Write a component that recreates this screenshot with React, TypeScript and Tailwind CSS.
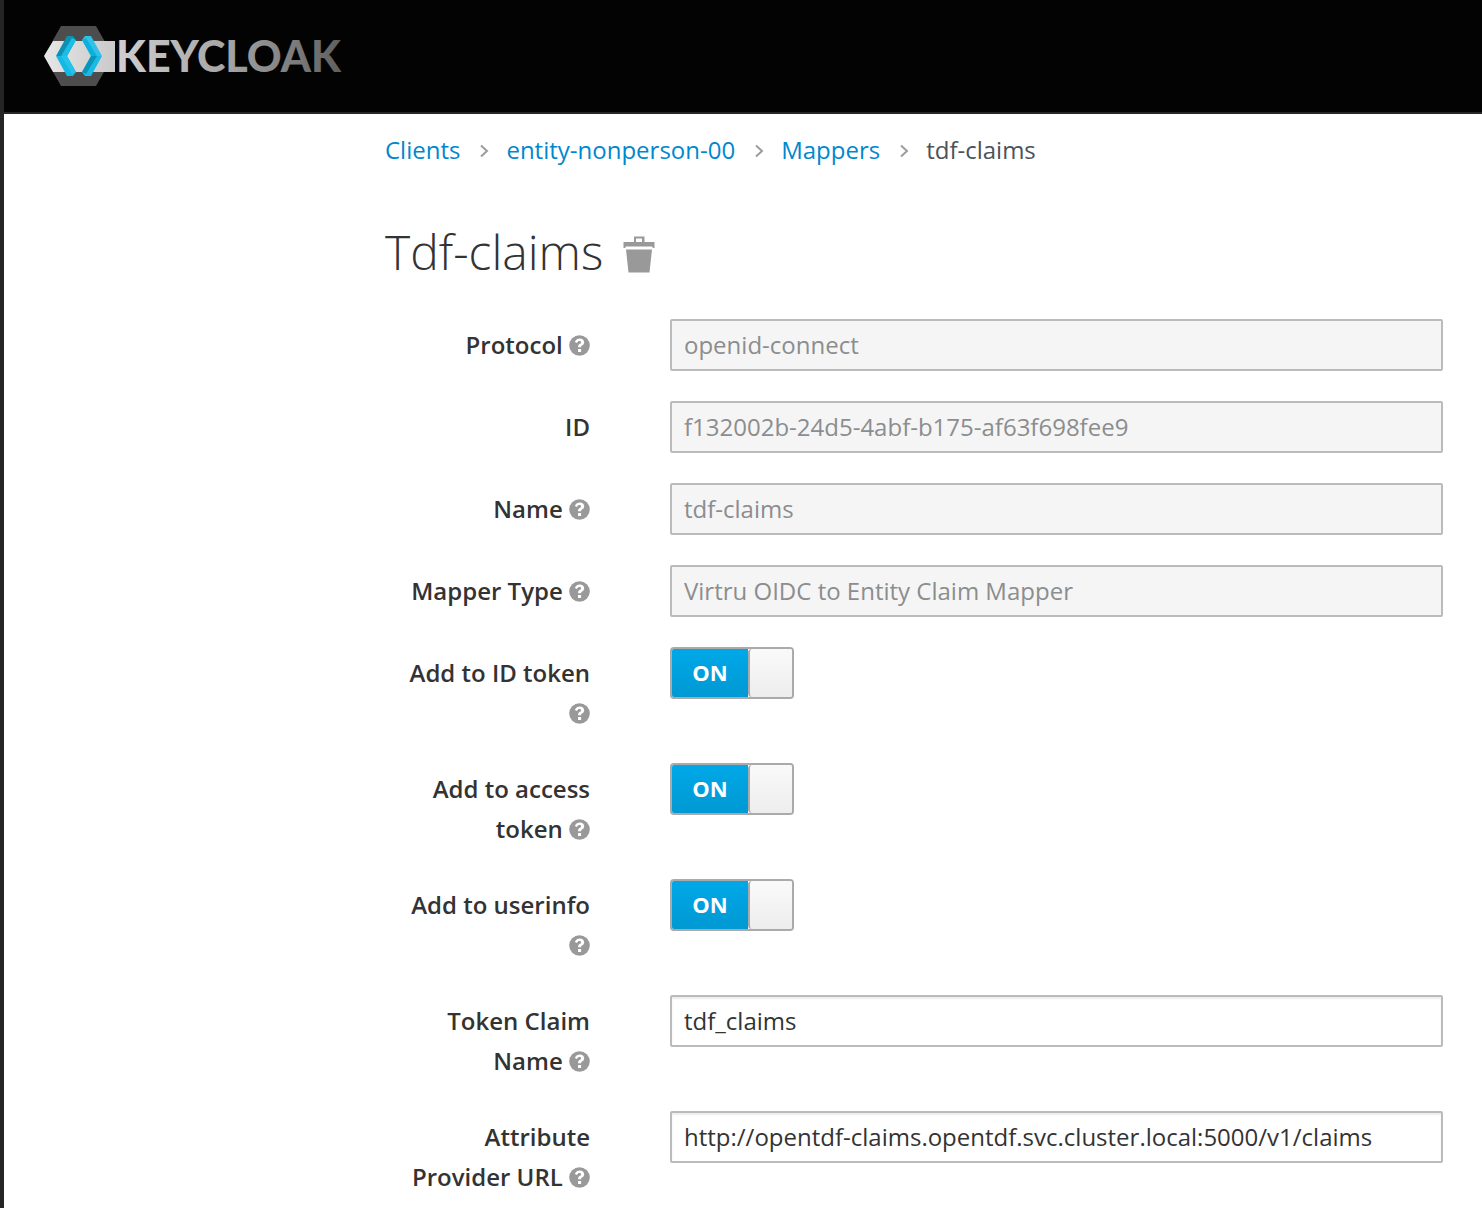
import { Fragment, useState } from "react";

function Logo() {
  return (
    <svg width="300" height="60" viewBox="0 0 300 60" role="img" aria-label="Keycloak">
      <defs>
        <linearGradient id="bar" x1="0" x2="1" y1="0" y2="0">
          <stop offset="0" stopColor="#e6e6e6" />
          <stop offset="1" stopColor="#cacaca" />
        </linearGradient>
        <linearGradient id="word" gradientUnits="userSpaceOnUse" x1="74" x2="296" y1="0" y2="0">
          <stop offset="0" stopColor="#cfcfcf" />
          <stop offset="0.5" stopColor="#a4a4a4" />
          <stop offset="1" stopColor="#606060" />
        </linearGradient>
      </defs>
      <path d="M17 0H52L69 30L52 60H17L0 30Z" fill="#4d4d4d" />
      <path d="M0 30L9 15H0ZM0 30L9 46H0Z" fill="#030303" />
      <path d="M9 15H71V46H9L0 30Z" fill="url(#bar)" />
      <path d="M23 10H29L32 14L23 30L12 30Z" fill="#0b90b2" />
      <path d="M28 12L32 14L23 30H17Z" fill="#1abde8" />
      <path d="M12 30H23L32 46L29 50H23Z" fill="#14b8e4" />
      <path d="M17 30H23L32 46L28 48Z" fill="#27c2ea" />
      <path d="M47 10H41L38 14L47 30L58 30Z" fill="#31c1e8" />
      <path d="M42 12L38 14L47 30H53Z" fill="#0cb0dc" />
      <path d="M58 30H47L38 46L41 50H47Z" fill="#18bbe6" />
      <path d="M53 30H47L38 46L42 48Z" fill="#0a94b8" />
      <text x="72" y="46" fill="url(#word)" fontSize="43" fontWeight="900" fontFamily="Lato, sans-serif">
        KEYCLOAK
      </text>
    </svg>
  );
}

function Help({ about }: { about: string }) {
  return (
    <button type="button" aria-label={`Help: ${about}`} className="inline-block h-[21px] w-[21px] align-[-2px]">
      <svg viewBox="0 0 21 21" className="block h-full w-full">
        <circle cx="10.5" cy="10.5" r="10.3" fill="#999" />
        <path
          d="M5.8 6.9C6.9 4.7 8.4 3.5 10.8 3.5C13.3 3.5 15.2 5 15.2 7.2C15.2 8.8 14.3 9.8 13.1 10.5C12.4 10.9 12.1 11.2 12.1 12.3H9C9 10.3 9.6 9.6 11 8.8C11.7 8.4 12 8.1 12 7.4C12 6.6 11.4 6.1 10.4 6.1C9.4 6.1 8.8 6.6 8 7.9Z"
          fill="#fff"
        />
        <path d="M9 14H12.1V17H9Z" fill="#fff" />
      </svg>
    </button>
  );
}

function Chevron() {
  return (
    <svg width="9" height="14" viewBox="0 0 9 14" className="mr-[17px] ml-5 mt-0.5" aria-hidden="true">
      <path d="M1 1.500L7 7L1 12.500" fill="none" stroke="#9c9c9c" strokeWidth="2" />
    </svg>
  );
}

function Switch({ id, defaultOn }: { id: string; defaultOn: boolean }) {
  const [on, setOn] = useState(defaultOn);
  return (
    <button
      id={id}
      type="button"
      role="switch"
      aria-checked={on}
      onClick={() => setOn(!on)}
      className={`flex h-[52px] w-[124px] overflow-hidden rounded border-2 border-[#aaa] ${on ? "flex-row" : "flex-row-reverse"}`}
    >
      <span
        className={`flex h-full flex-1 items-center justify-center text-[22px] font-bold ${on ? "bg-linear-to-b from-[#00a8e8] to-[#0099d3] text-white" : "bg-[#eee] text-[#333]"}`}
      >
        {on ? "ON" : "OFF"}
      </span>
      <span className="h-12 w-11 rounded-l-sm border-l-2 border-[#aaa] bg-linear-to-b from-[#fafafa] to-[#ededed]" />
    </button>
  );
}

type Field = {
  id: string;
  label: string;
  help?: boolean;
  value?: string;
  disabled?: boolean;
};

const fields: Field[] = [
  { id: "protocol", label: "Protocol", help: true, value: "openid-connect", disabled: true },
  { id: "mapper-id", label: "ID", value: "f132002b-24d5-4abf-b175-af63f698fee9", disabled: true },
  { id: "name", label: "Name", help: true, value: "tdf-claims", disabled: true },
  { id: "mapper-type", label: "Mapper Type", help: true, value: "Virtru OIDC to Entity Claim Mapper", disabled: true },
  { id: "id-token", label: "Add to ID token", help: true },
  { id: "access-token", label: "Add to access token", help: true },
  { id: "userinfo", label: "Add to userinfo", help: true },
  { id: "claim-name", label: "Token Claim Name", help: true, value: "tdf_claims" },
  {
    id: "provider-url",
    label: "Attribute Provider URL",
    help: true,
    value: "http://opentdf-claims.opentdf.svc.cluster.local:5000/v1/claims",
  },
];

const crumbs = ["Clients", "entity-nonperson-00", "Mappers"];

export default function App() {
  return (
    <div className="min-h-screen border-l-4 border-[#262427] bg-white font-['Open_Sans',sans-serif] text-2xl text-[#333]">
      <header className="flex h-[114px] items-center border-b-2 border-[#292629] bg-[#030303] pl-10">
        <a href="#" aria-label="Keycloak home">
          <Logo />
        </a>
      </header>
      <main className="pr-[39px] pl-[381px]">
        <nav aria-label="Breadcrumb" className="flex items-center pt-4 leading-10">
          {crumbs.map((c) => (
            <Fragment key={c}>
              <a href="#" className="text-[#0088ce]">
                {c}
              </a>
              <Chevron />
            </Fragment>
          ))}
          <span className="text-[#4d5258]">tdf-claims</span>
        </nav>
        <h1 className="mt-[54px] flex items-center text-5xl leading-[56px] font-light">
          Tdf-claims
          <button type="button" aria-label="Delete mapper" className="ml-5">
            <svg width="32" height="37" viewBox="0 0 32 37" className="mt-1 block">
              <path d="M11 6V0.5H21.500V6H31.500V12H30L29 10.500H3L2 12H0.500V6ZM13 6H19V2.500H13Z" fill="#999" fillRule="evenodd" />
              <path d="M3 13.500H29L26.500 36.500H5.500Z" fill="#999" />
            </svg>
          </button>
        </h1>
        <form className="mt-[39px] flex flex-col gap-[30px]" onSubmit={(e) => e.preventDefault()}>
          {fields.map((f) => (
            <div key={f.id} className="grid grid-cols-[205px_1fr] items-start gap-x-20">
              <div className="max-h-[86px] pt-1.5 pl-1 text-right leading-10 font-semibold">
                <label htmlFor={f.id}>{f.label}</label>
                {f.help && (
                  <>
                    {" "}
                    <Help about={f.label} />
                  </>
                )}
              </div>
              {f.value === undefined ? (
                <Switch id={f.id} defaultOn />
              ) : (
                <input
                  id={f.id}
                  type="text"
                  defaultValue={f.value}
                  disabled={f.disabled}
                  className="h-[52px] w-full rounded-xs border-2 border-[#bbb] bg-white px-3 pb-0.5 shadow-[inset_0_2px_2px_rgba(3,3,3,0.075)] disabled:bg-[#f5f5f5] disabled:text-[#8b8d8f] disabled:shadow-none"
                />
              )}
            </div>
          ))}
        </form>
      </main>
    </div>
  );
}
